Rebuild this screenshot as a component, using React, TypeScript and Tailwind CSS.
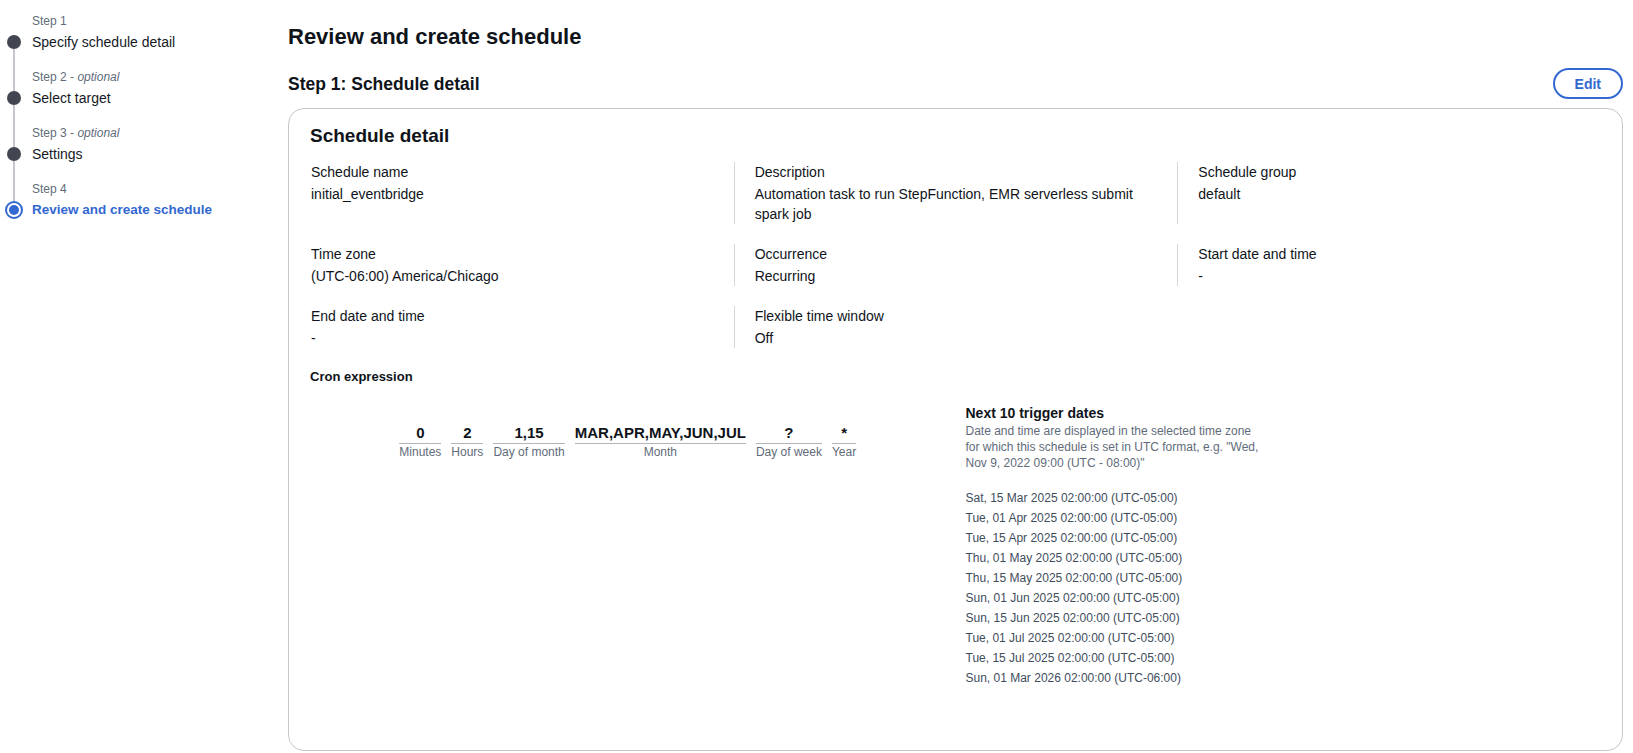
import React from "react";

type Step = {
  label: string;
  title: string;
  optional?: boolean;
  active?: boolean;
};

const steps: Step[] = [
  { label: "Step 1", title: "Specify schedule detail" },
  { label: "Step 2", title: "Select target", optional: true },
  { label: "Step 3", title: "Settings", optional: true },
  { label: "Step 4", title: "Review and create schedule", active: true },
];

const details: { label: string; value: string }[][] = [
  [
    { label: "Schedule name", value: "initial_eventbridge" },
    {
      label: "Description",
      value: "Automation task to run StepFunction, EMR serverless submit spark job",
    },
    { label: "Schedule group", value: "default" },
  ],
  [
    { label: "Time zone", value: "(UTC-06:00) America/Chicago" },
    { label: "Occurrence", value: "Recurring" },
    { label: "Start date and time", value: "-" },
  ],
  [
    { label: "End date and time", value: "-" },
    { label: "Flexible time window", value: "Off" },
  ],
];

const cron = [
  { value: "0", label: "Minutes" },
  { value: "2", label: "Hours" },
  { value: "1,15", label: "Day of month" },
  { value: "MAR,APR,MAY,JUN,JUL", label: "Month" },
  { value: "?", label: "Day of week" },
  { value: "*", label: "Year" },
];

const triggerDates = [
  "Sat, 15 Mar 2025 02:00:00 (UTC-05:00)",
  "Tue, 01 Apr 2025 02:00:00 (UTC-05:00)",
  "Tue, 15 Apr 2025 02:00:00 (UTC-05:00)",
  "Thu, 01 May 2025 02:00:00 (UTC-05:00)",
  "Thu, 15 May 2025 02:00:00 (UTC-05:00)",
  "Sun, 01 Jun 2025 02:00:00 (UTC-05:00)",
  "Sun, 15 Jun 2025 02:00:00 (UTC-05:00)",
  "Tue, 01 Jul 2025 02:00:00 (UTC-05:00)",
  "Tue, 15 Jul 2025 02:00:00 (UTC-05:00)",
  "Sun, 01 Mar 2026 02:00:00 (UTC-06:00)",
];

function StepNav() {
  return (
    <nav className="w-[288px] shrink-0 pt-[13px]">
      <ul>
        {steps.map((step, i) => {
          const first = i === 0;
          const last = i === steps.length - 1;
          return (
            <li key={step.label} className="flex">
              <div className="flex w-7 flex-col items-center">
                <div
                  className={`w-[2px] ${step.active ? "h-5" : "h-[22px]"} ${
                    first ? "bg-transparent" : "bg-[#c6c6cd]"
                  }`}
                />
                {step.active ? (
                  <span className="flex h-[18px] w-[18px] items-center justify-center rounded-full border-2 border-[#3368d1] bg-white">
                    <span className="h-[10px] w-[10px] rounded-full bg-[#3368d1]" />
                  </span>
                ) : (
                  <span className="h-[14px] w-[14px] rounded-full bg-[#424650]" />
                )}
                <div className={`w-[2px] flex-1 ${last ? "bg-transparent" : "bg-[#c6c6cd]"}`} />
              </div>
              <div className="ml-1 pb-[17px]">
                <div className="text-xs leading-4 text-[#5f6b7a]">
                  {step.label}
                  {step.optional && (
                    <>
                      {" - "}
                      <i>optional</i>
                    </>
                  )}
                </div>
                <div
                  className={`mt-[3px] leading-5 ${
                    step.active ? "text-[13.5px] font-bold text-[#3368d1]" : "text-sm text-[#16191f]"
                  }`}
                >
                  {step.title}
                </div>
              </div>
            </li>
          );
        })}
      </ul>
    </nav>
  );
}

function DetailGrid() {
  return (
    <div className="-mx-5 mt-[14px] grid grid-cols-3 gap-y-5">
      {details.flatMap((row, r) =>
        [0, 1, 2].map((c) => {
          const item = row[c];
          if (!item) return <div key={`${r}-${c}`} />;
          return (
            <div
              key={`${r}-${c}`}
              className={`border-l px-5 ${c === 0 ? "border-transparent" : "border-[#d5d5d9]"}`}
            >
              <div className="mb-0.5 text-sm leading-5">{item.label}</div>
              <div className="text-sm leading-5">{item.value}</div>
            </div>
          );
        })
      )}
    </div>
  );
}

export default function App() {
  return (
    <div className="flex h-[753px] w-full overflow-hidden bg-white font-['Liberation_Sans',Arial,sans-serif] text-[#0f141a]">
      <StepNav />
      <main className="min-w-0 flex-1 pr-[10px] pt-[22px]">
        <h1 className="text-[22px] font-bold leading-[30px]">Review and create schedule</h1>
        <div className="mt-4 flex items-center justify-between">
          <h2 className="text-[17.5px] font-bold leading-[22px]">Step 1: Schedule detail</h2>
          <button className="h-[31px] rounded-full border-2 border-[#3368d1] px-5 text-sm font-bold text-[#3368d1]">
            Edit
          </button>
        </div>
        <section className="mt-[9px] h-[643px] rounded-2xl border border-[#c6c6cd] px-[21px] pt-[15px]">
          <h3 className="text-[19px] font-bold leading-6">Schedule detail</h3>
          <DetailGrid />
          <div className="mt-[19px] text-[13px] font-bold leading-5">Cron expression</div>
          <div className="mt-4 grid grid-cols-2 gap-5">
            <div className="flex justify-center pt-5">
              <div className="flex items-start gap-[10px]">
                {cron.map((c) => (
                  <div key={c.label} className="flex flex-col">
                    <div className="border-b border-[#b4b4bb] text-center text-[15px] font-bold leading-5">
                      {c.value}
                    </div>
                    <div className="text-center text-xs leading-4 text-[#5f6b7a]">{c.label}</div>
                  </div>
                ))}
              </div>
            </div>
            <div>
              <div className="text-sm font-bold leading-5">Next 10 trigger dates</div>
              <p className="w-[300px] text-xs leading-4 text-[#5f6b7a]">
                Date and time are displayed in the selected time zone for which this schedule is set in UTC
                format, e.g. "Wed, Nov 9, 2022 09:00 (UTC - 08:00)"
              </p>
              <ul className="mt-[17px] text-xs leading-5 text-[#414d5c]">
                {triggerDates.map((d) => (
                  <li key={d}>{d}</li>
                ))}
              </ul>
            </div>
          </div>
        </section>
      </main>
    </div>
  );
}
